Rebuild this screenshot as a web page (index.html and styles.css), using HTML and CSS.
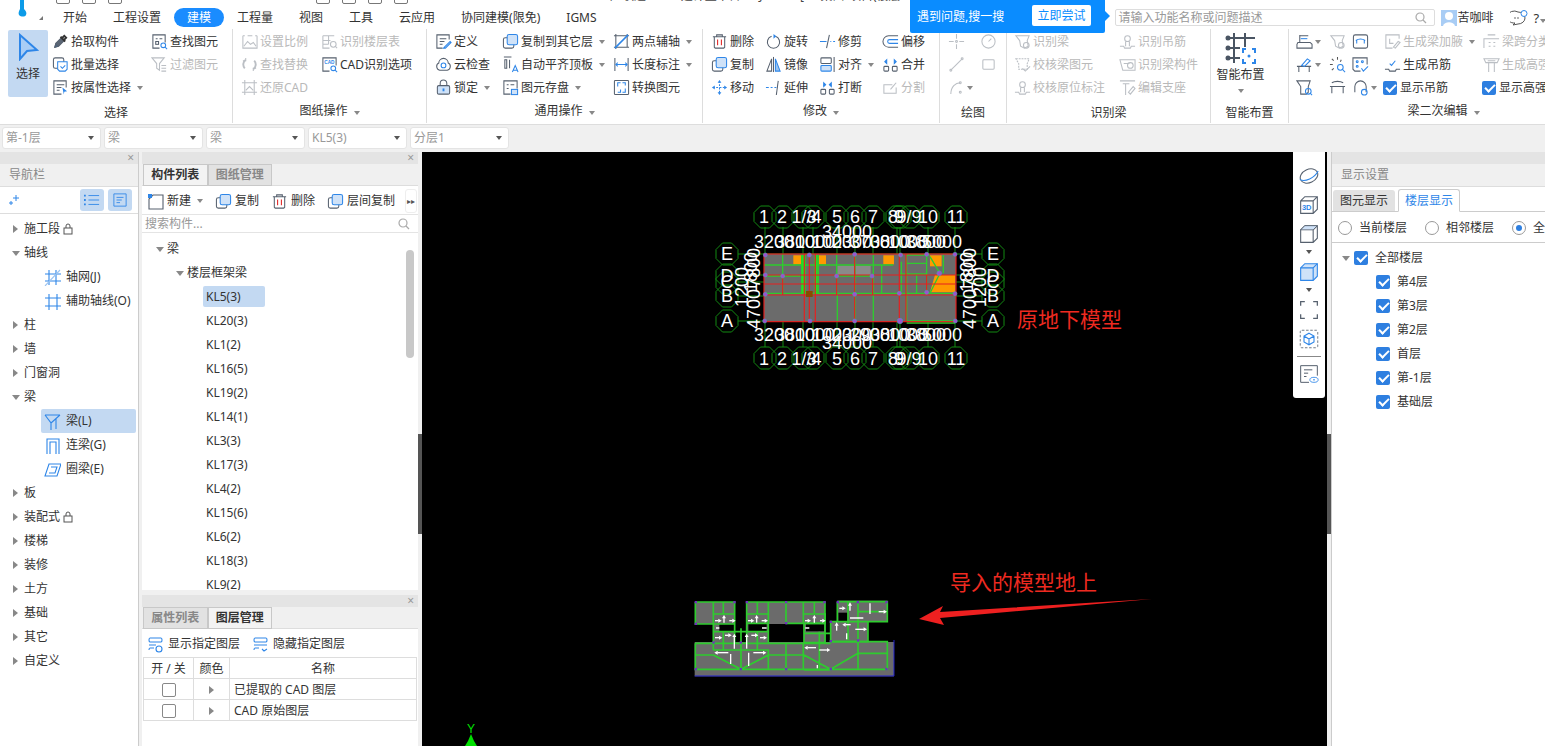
FILE: index.html
```html
<!DOCTYPE html>
<html lang="en">

<head>
    <meta charset="UTF-8">
    <meta name="viewport" content="width=device-width, initial-scale=1.0">
    <title>GTJ - 建模</title>
    <link rel="stylesheet" href="styles.css">
</head>

<body>
    <!-- icon sheet -->
    <svg class="sheet" xmlns="http://www.w3.org/2000/svg">
        <symbol id="pick" viewBox="0 0 18 18"><path d="M3 15l1-4 6-6 3 3-6 6z" fill="#5b6675"/><path d="M9 4l5 5M11 5l2-2 2 2-2 2" stroke="#333" stroke-width="2"/><path d="M3 15l1-3 2 2z" fill="#2e86e8"/></symbol>
        <symbol id="batch" viewBox="0 0 18 18"><rect x="1.5" y="2" width="11" height="11" rx="2"/><path d="M6 6h10v8l-2 2H8l-2-2z" stroke="#2e86e8" fill="#fff"/><path d="M9 11l2 2 3-3" stroke="#2e86e8"/></symbol>
        <symbol id="attr" viewBox="0 0 18 18"><path d="M15 9V2H2v14h8"/><path d="M5 6h8M5 9h5M5 12h3"/><path d="M11 9l5 4-3 .5-.5 3z" fill="#2e86e8" stroke="none"/></symbol>
        <symbol id="find" viewBox="0 0 18 18"><path d="M9 16H2V2h13v8"/><path d="M5 6h2M9 6h3"/><rect x="5" y="9" width="3" height="3"/><circle cx="13" cy="13" r="2.5" stroke="#2e86e8"/><path d="M15 15l2 2" stroke="#2e86e8"/></symbol>
        <symbol id="filter" viewBox="0 0 18 18"><path d="M1 2h13L9 8v7L6 13V8z"/><path d="M11 10h5M11 13h5M11 16h5"/></symbol>
        <symbol id="scale" viewBox="0 0 18 18"><path d="M2 3v13h15V3M2 3h2M15 3h2M7 3h5"/><path d="M3 14l4-5 3 3 3-2 3 4"/></symbol>
        <symbol id="floor" viewBox="0 0 18 18"><path d="M2 3h12M2 3v13h7M2 8h8M2 12h6M8 3v9"/><circle cx="13" cy="12" r="3"/><path d="M15 14l2 2"/></symbol>
        <symbol id="swap" viewBox="0 0 18 18"><path d="M4 13a6 6 0 0 1 1-9M14 5a6 6 0 0 1-1 9" stroke-width="2"/><path d="M5 2v3H2M13 16v-3h3"/></symbol>
        <symbol id="restore" viewBox="0 0 18 18"><path d="M4 1v16M14 1v16M1 4h16M1 14h16"/><path d="M5 12l4-4 4 4"/></symbol>
        <symbol id="cad" viewBox="0 0 18 18"><path d="M9 16H2V2h14v8"/><text x="3.5" y="8" font-size="5" font-family="Liberation Sans" font-weight="700" fill="#2e86e8" stroke="none">CAD</text><circle cx="13" cy="13" r="2.5" stroke="#2e86e8"/><path d="M15 15l2 2" stroke="#2e86e8"/></symbol>
        <symbol id="define" viewBox="0 0 18 18"><path d="M15 7V2H2v14h6"/><path d="M5 6h7M5 9h5M5 12h3"/><path d="M10 15l6-6 1 1-6 6h-2z" stroke="#2e86e8"/></symbol>
        <symbol id="cloud" viewBox="0 0 18 18"><path d="M5 15a4 4 0 0 1-1-7.5a5 5 0 0 1 10 0a4 4 0 0 1-1 7.5z"/><circle cx="9" cy="10" r="2.5" stroke="#2e86e8"/></symbol>
        <symbol id="lock" viewBox="0 0 18 18"><rect x="2.5" y="7" width="13" height="9" rx="1.5" fill="#cfe2f8"/><path d="M5.5 7V4.5a3.5 3.5 0 0 1 7 0V7"/><path d="M9 10v3" stroke="#2e86e8" stroke-width="2"/></symbol>
        <symbol id="copy" viewBox="0 0 18 18"><rect x="1.5" y="5" width="11" height="11" rx="2"/><rect x="5.5" y="1.5" width="11" height="11" rx="2" fill="#cfe2f8" stroke="#2e86e8"/></symbol>
        <symbol id="flush" viewBox="0 0 18 18"><path d="M2 1h8M3 4v9h2V4zM8 4v9"/><path d="M11 17l3-7 3 7M12 15h4" stroke="#2e86e8"/></symbol>
        <symbol id="save" viewBox="0 0 18 18"><path d="M9 16H2V2h14v8"/><path d="M5 6h2M9 6h4M5 10h2"/><rect x="10" y="11" width="6.5" height="5.5" fill="#cfe2f8" stroke="#2e86e8"/></symbol>
        <symbol id="twopoint" viewBox="0 0 18 18"><path d="M3 1v16M15 1v14M1 3h16M1 15h16"/><path d="M2 16L16 2" stroke="#2e86e8" stroke-width="1.6"/></symbol>
        <symbol id="dim" viewBox="0 0 18 18"><path d="M2 2v14M16 2v14"/><path d="M3 9h12M5 7L3 9l2 2M13 7l2 2-2 2" stroke="#2e86e8"/></symbol>
        <symbol id="convert" viewBox="0 0 18 18"><rect x="1.5" y="1.5" width="15" height="15" rx="1"/><path d="M5 8V4h3M13 10v4h-3M10 4h3v3M5 14h3v-3" stroke="#2e86e8"/></symbol>
        <symbol id="del" viewBox="0 0 18 18"><path d="M2 4h14M6 4V2h6v2M3.5 4v11l1 1h9l1-1V4"/><path d="M7 7v6M11 7v6" stroke="#e02020"/></symbol>
        <symbol id="rotate" viewBox="0 0 18 18"><path d="M11 3.5a6.5 6.5 0 1 1-4 0"/><path d="M9 1l3 2.5L9 6z" fill="#2e86e8" stroke="none"/></symbol>
        <symbol id="trim" viewBox="0 0 18 18"><path d="M1 9h7" stroke="#2e86e8"/><path d="M8 16l3-14"/><path d="M12 9h1M15 9h2" stroke="#2e86e8"/></symbol>
        <symbol id="offset" viewBox="0 0 18 18"><path d="M17 3H7a6 6 0 0 0 0 12h10"/><path d="M17 7H8a2 2 0 0 0 0 4h9" stroke="#2e86e8"/></symbol>
        <symbol id="mirror" viewBox="0 0 18 18"><path d="M9 1v16"/><path d="M7 3L2 16h5z"/><path d="M11 3l5 13h-5z" fill="#9cc4f0" stroke="#2e86e8"/></symbol>
        <symbol id="align" viewBox="0 0 18 18"><rect x="2" y="2" width="11" height="6" rx="1"/><rect x="2" y="10" width="11" height="6" rx="1" fill="#cfe2f8" stroke="#2e86e8"/><path d="M16 1v16"/></symbol>
        <symbol id="merge" viewBox="0 0 18 18"><rect x="2" y="11" width="5" height="5" rx="1"/><rect x="11" y="11" width="5" height="5" rx="1"/><path d="M3 6l2-2v4zM15 6l-2-2v4z" fill="#2e86e8" stroke="#2e86e8"/></symbol>
        <symbol id="move" viewBox="0 0 18 18"><path d="M9 2v14M2 9h14" stroke="#2e86e8" stroke-dasharray="2 1.5"/><path d="M7 4l2-3 2 3zM7 14l2 3 2-3zM4 7L1 9l3 2zM14 7l3 2-3 2z" fill="#2e86e8" stroke="none"/></symbol>
        <symbol id="extend" viewBox="0 0 18 18"><path d="M1 9h3M6 9h2M10 9h2" stroke="#2e86e8"/><path d="M14 2l-2 15"/></symbol>
        <symbol id="break" viewBox="0 0 18 18"><rect x="2" y="11" width="5" height="5" rx="1"/><rect x="11" y="11" width="5" height="5" rx="1"/><path d="M7 6L5 4v4zM11 6l2-2v4z" fill="#2e86e8" stroke="#2e86e8"/></symbol>
        <symbol id="split" viewBox="0 0 18 18"><path d="M15 9v6H2V6h9"/><path d="M9 11l6-7"/></symbol>
        <symbol id="d-cross" viewBox="0 0 18 18"><path d="M1 9h5M12 9h5M9 1v5M9 12v5"/><circle cx="9" cy="9" r="1"/></symbol>
        <symbol id="d-arc" viewBox="0 0 18 18"><circle cx="9" cy="9" r="7"/><path d="M9 9l3-3"/></symbol>
        <symbol id="d-line" viewBox="0 0 18 18"><path d="M3 15L15 3"/><circle cx="3" cy="15" r="1"/><circle cx="15" cy="3" r="1"/></symbol>
        <symbol id="d-rect" viewBox="0 0 18 18"><rect x="3" y="4" width="12" height="10" rx="1"/></symbol>
        <symbol id="d-curve" viewBox="0 0 18 18"><path d="M3 16c0-8 5-12 10-12"/><circle cx="13" cy="4" r="1"/><circle cx="13" cy="14" r="1"/></symbol>
        <symbol id="shape" viewBox="0 0 18 18"><path d="M2 3h14l-2 5 1 6-4 2-4-2-1-6z"/><circle cx="13" cy="13" r="3"/></symbol>
        <symbol id="check" viewBox="0 0 18 18"><path d="M2 3h14l-2 5v6H5V8z" stroke-dasharray="2 1"/><path d="M9 13l3 3 5-5"/></symbol>
        <symbol id="hook" viewBox="0 0 18 18"><path d="M1 14h4l1 2h6l1-2h4"/><circle cx="9" cy="6" r="3"/><path d="M7 14V9M11 14V9"/></symbol>
        <symbol id="comp" viewBox="0 0 18 18"><path d="M1 4h16v11H4zM5 8h6"/><circle cx="12" cy="10" r="3"/></symbol>
        <symbol id="seat" viewBox="0 0 18 18"><path d="M1 2h16M4 5h7M7 5v12M10 14l5-6 2 2-5 6z"/></symbol>
        <symbol id="haunch" viewBox="0 0 18 18"><path d="M16 6V2H2v14h7M6 6v5h4"/><path d="M10 15l5-6 2 1-5 6z"/></symbol>
        <symbol id="span" viewBox="0 0 18 18"><path d="M1 16V6h16M5 2h8M6 10h2M11 10h2M6 14h2M11 14h2"/></symbol>
        <symbol id="high" viewBox="0 0 18 18"><path d="M1 3h16l-2 4H3zM6 7v10M12 7v10M5 5h8"/></symbol>
        <symbol id="tool-a" viewBox="0 0 18 18"><path d="M4 2v8M4 3h9"/><path d="M2 10h13l2 2v4H1v-4z" fill="none"/><path d="M5 6h7" stroke="#2e86e8"/></symbol>
        <symbol id="tool-b" viewBox="0 0 18 18"><path d="M1 11h15M3 11v6M14 11v6"/><path d="M6 10l6-7 3 2-6 6z" stroke="#2e86e8"/></symbol>
        <symbol id="tool-c" viewBox="0 0 18 18"><path d="M1 2h14l-2 6v6l-2 2H5V8z"/><circle cx="13" cy="13" r="3" stroke="#2e86e8"/><path d="M15 15l2 2" stroke="#2e86e8"/></symbol>
        <symbol id="tool-d" viewBox="0 0 18 18"><rect x="1.5" y="2" width="15" height="14" rx="2"/><path d="M4 8c3-2 7-2 10 0M5 11V8M13 11V8" stroke="#2e86e8"/></symbol>
        <symbol id="tool-e" viewBox="0 0 18 18"><path d="M9 1v3M3 3l2 2M1 9h3M3 15l2-2M13 4l-1 2" stroke="#555"/><circle cx="12" cy="12" r="3" stroke="#2e86e8"/><path d="M14 14l3 3" stroke="#2e86e8"/></symbol>
        <symbol id="tool-f" viewBox="0 0 18 18"><path d="M9 16H3l-2-2V2h15v7"/><circle cx="5.5" cy="6" r="1" stroke="#2e86e8"/><circle cx="11" cy="6" r="1" stroke="#2e86e8"/><circle cx="5.5" cy="11" r="1" stroke="#2e86e8"/><path d="M10 13l2 3 5-5" stroke="#2e86e8"/></symbol>
        <symbol id="tool-g" viewBox="0 0 18 18"><path d="M1 8h16M3 8v7M15 8v7M3 4c3-2 9-2 12 0"/></symbol>
        <symbol id="tool-h" viewBox="0 0 18 18"><path d="M3 14V8a6 6 0 0 1 12 0v6"/><circle cx="13" cy="14" r="3" stroke="#2e86e8"/></symbol>
        <symbol id="gen-hook" viewBox="0 0 18 18"><path d="M1 14h4l1 2h6l1-2h4"/><path d="M6 8l2 2 4-5" stroke="#2e86e8"/></symbol>
    </svg>

    <div class="top">
        <svg class="logo" viewBox="0 0 12 18"><path d="M4 0h4v9c2 2 3 4 2 6-1 2-5 2-7 0-1-2 0-4 1-6z" fill="#0c9be8"/></svg>
        <div class="titlebar">
            <span class="qa"></span><span class="qa"></span><span class="qa"></span><span class="qa-space"></span><span class="qa"></span><span class="qa"></span><span class="qa"></span><span class="qa"></span>
            <span class="title-text">广联达BIM土建计量平台 GTJ2021 - [D:\桌面\项目(楼层...</span>
        </div>
        <div class="tabs-row">
            <i class="corner"></i>
            <span class="tab">开始</span>
            <span class="tab">工程设置</span>
            <span class="tab tab-on">建模</span>
            <span class="tab">工程量</span>
            <span class="tab">视图</span>
            <span class="tab">工具</span>
            <span class="tab">云应用</span>
            <span class="tab">协同建模(限免)</span>
            <span class="tab">IGMS</span>
            <div class="search-box">请输入功能名称或问题描述
                <svg class="mag" viewBox="0 0 12 12"><circle cx="5" cy="5" r="4"/><path d="M8 8l3 3"/></svg>
            </div>
            <div class="user">
                <svg class="avatar" viewBox="0 0 16 16"><rect width="16" height="16" fill="#a9cdf5"/><circle cx="8" cy="6" r="4" fill="#fff"/><path d="M2 16c1-5 11-5 12 0z" fill="#fff"/></svg>
                苦咖啡
            </div>
            <svg class="chat" viewBox="0 0 18 16"><path d="M8 2a7 6 0 1 0-3 11l-2 2 5-1a7 6 0 0 0 0-12z" fill="none" stroke="#555"/><circle cx="5" cy="8" r=".8" fill="#555"/><circle cx="8" cy="8" r=".8" fill="#555"/><circle cx="14" cy="3.5" r="3" fill="#fff" stroke="#2e86e8"/></svg>
            <span class="help">?<i class="caret"></i></span>
        </div>
        <div class="callout">
            <span>遇到问题,搜一搜</span>
            <span class="try">立即尝试</span>
        </div>
    </div>

    <div class="ribbon">
        <section class="group g-select">
            <div class="group-body">
                <div class="big-select">
                    <svg viewBox="0 0 22 28"><path d="M3 2v24l7-8 10-1z" fill="#a9cdf5" stroke="#2e86e8" stroke-width="2"/></svg>
                    选择
                </div>
                <div class="col">
                    <div class="tool"><svg class="ico"><use href="#pick"/></svg>拾取构件</div>
                    <div class="tool"><svg class="ico"><use href="#batch"/></svg>批量选择</div>
                    <div class="tool"><svg class="ico"><use href="#attr"/></svg>按属性选择<i class="caret"></i></div>
                </div>
                <div class="col">
                    <div class="tool"><svg class="ico"><use href="#find"/></svg>查找图元</div>
                    <div class="tool off"><svg class="ico"><use href="#filter"/></svg>过滤图元</div>
                </div>
            </div>
            <div class="group-label">选择</div>
        </section>
        <section class="group g-drawing">
            <div class="group-body">
                <div class="col">
                    <div class="tool off"><svg class="ico"><use href="#scale"/></svg>设置比例</div>
                    <div class="tool off"><svg class="ico"><use href="#swap"/></svg>查找替换</div>
                    <div class="tool off"><svg class="ico"><use href="#restore"/></svg>还原CAD</div>
                </div>
                <div class="col">
                    <div class="tool off"><svg class="ico"><use href="#floor"/></svg>识别楼层表</div>
                    <div class="tool"><svg class="ico"><use href="#cad"/></svg>CAD识别选项</div>
                </div>
            </div>
            <div class="group-label lift">图纸操作<i class="caret"></i></div>
        </section>
        <section class="group g-common">
            <div class="group-body">
                <div class="col">
                    <div class="tool"><svg class="ico"><use href="#define"/></svg>定义</div>
                    <div class="tool"><svg class="ico"><use href="#cloud"/></svg>云检查</div>
                    <div class="tool"><svg class="ico"><use href="#lock"/></svg>锁定<i class="caret"></i></div>
                </div>
                <div class="col">
                    <div class="tool"><svg class="ico"><use href="#copy"/></svg>复制到其它层<i class="caret"></i></div>
                    <div class="tool"><svg class="ico"><use href="#flush"/></svg>自动平齐顶板<i class="caret"></i></div>
                    <div class="tool"><svg class="ico"><use href="#save"/></svg>图元存盘<i class="caret"></i></div>
                </div>
                <div class="col">
                    <div class="tool"><svg class="ico"><use href="#twopoint"/></svg>两点辅轴<i class="caret"></i></div>
                    <div class="tool"><svg class="ico"><use href="#dim"/></svg>长度标注<i class="caret"></i></div>
                    <div class="tool"><svg class="ico"><use href="#convert"/></svg>转换图元</div>
                </div>
            </div>
            <div class="group-label lift">通用操作<i class="caret"></i></div>
        </section>
        <section class="group g-modify">
            <div class="group-body">
                <div class="col">
                    <div class="tool"><svg class="ico"><use href="#del"/></svg>删除</div>
                    <div class="tool"><svg class="ico"><use href="#copy"/></svg>复制</div>
                    <div class="tool"><svg class="ico"><use href="#move"/></svg>移动</div>
                </div>
                <div class="col">
                    <div class="tool"><svg class="ico"><use href="#rotate"/></svg>旋转</div>
                    <div class="tool"><svg class="ico"><use href="#mirror"/></svg>镜像</div>
                    <div class="tool"><svg class="ico"><use href="#extend"/></svg>延伸</div>
                </div>
                <div class="col">
                    <div class="tool"><svg class="ico"><use href="#trim"/></svg>修剪</div>
                    <div class="tool"><svg class="ico"><use href="#align"/></svg>对齐<i class="caret"></i></div>
                    <div class="tool"><svg class="ico"><use href="#break"/></svg>打断</div>
                </div>
                <div class="col">
                    <div class="tool"><svg class="ico"><use href="#offset"/></svg>偏移</div>
                    <div class="tool"><svg class="ico"><use href="#merge"/></svg>合并</div>
                    <div class="tool off"><svg class="ico"><use href="#split"/></svg>分割</div>
                </div>
            </div>
            <div class="group-label lift">修改<i class="caret"></i></div>
        </section>
        <section class="group g-draw">
            <div class="group-body">
                <div class="col">
                    <div class="tool off"><svg class="ico"><use href="#d-cross"/></svg></div>
                    <div class="tool off"><svg class="ico"><use href="#d-line"/></svg></div>
                    <div class="tool off"><svg class="ico"><use href="#d-curve"/></svg><i class="caret"></i></div>
                </div>
                <div class="col">
                    <div class="tool off"><svg class="ico"><use href="#d-arc"/></svg></div>
                    <div class="tool off"><svg class="ico"><use href="#d-rect"/></svg></div>
                </div>
            </div>
            <div class="group-label">绘图</div>
        </section>
        <section class="group g-beam">
            <div class="group-body">
                <div class="col">
                    <div class="tool off"><svg class="ico"><use href="#shape"/></svg>识别梁</div>
                    <div class="tool off"><svg class="ico"><use href="#check"/></svg>校核梁图元</div>
                    <div class="tool off"><svg class="ico"><use href="#hook"/></svg>校核原位标注</div>
                </div>
                <div class="col">
                    <div class="tool off"><svg class="ico"><use href="#hook"/></svg>识别吊筋</div>
                    <div class="tool off"><svg class="ico"><use href="#comp"/></svg>识别梁构件</div>
                    <div class="tool off"><svg class="ico"><use href="#seat"/></svg>编辑支座</div>
                </div>
            </div>
            <div class="group-label">识别梁</div>
        </section>
        <section class="group g-smart">
            <div class="group-body smart-body">
                <svg class="smart-ico" viewBox="0 0 32 32">
                    <g fill="none" stroke="#4a5563" stroke-width="2"><path d="M9 1v30M20 1v14M3 6h27M3 16h12M3 26h12"/></g>
                    <g fill="#4a5563"><circle cx="3" cy="6" r="2.5"/><circle cx="3" cy="16" r="2.5"/><circle cx="3" cy="26" r="2.5"/></g>
                    <path d="M18 21v-4h3M27 17h3v4M30 27v4h-3M21 31h-3v-4" fill="none" stroke="#2e86e8" stroke-width="2"/>
                    <circle cx="24" cy="24" r="1.5" fill="#2e86e8"/>
                </svg>
                智能布置
                <i class="caret"></i>
            </div>
            <div class="group-label">智能布置</div>
        </section>
        <section class="group g-second">
            <div class="group-body">
                <div class="col">
                    <div class="tool"><svg class="ico"><use href="#tool-a"/></svg><i class="caret"></i></div>
                    <div class="tool"><svg class="ico"><use href="#tool-b"/></svg><i class="caret"></i></div>
                    <div class="tool"><svg class="ico"><use href="#tool-c"/></svg></div>
                </div>
                <div class="col">
                    <div class="tool off"><svg class="ico"><use href="#shape"/></svg></div>
                    <div class="tool"><svg class="ico"><use href="#tool-e"/></svg></div>
                    <div class="tool"><svg class="ico"><use href="#tool-g"/></svg></div>
                </div>
                <div class="col col-narrow">
                    <div class="tool"><svg class="ico"><use href="#tool-d"/></svg></div>
                    <div class="tool"><svg class="ico"><use href="#tool-f"/></svg></div>
                    <div class="tool"><svg class="ico"><use href="#tool-h"/></svg><i class="caret"></i></div>
                </div>
                <div class="col">
                    <div class="tool off"><svg class="ico"><use href="#haunch"/></svg>生成梁加腋<i class="caret"></i></div>
                    <div class="tool"><svg class="ico"><use href="#gen-hook"/></svg>生成吊筋</div>
                    <div class="tool tool-check"><span class="cb"></span>显示吊筋</div>
                </div>
                <div class="col">
                    <div class="tool off"><svg class="ico"><use href="#span"/></svg>梁跨分类</div>
                    <div class="tool off"><svg class="ico"><use href="#high"/></svg>生成高强</div>
                    <div class="tool tool-check"><span class="cb"></span>显示高强</div>
                </div>
            </div>
            <div class="group-label lift">梁二次编辑<i class="caret"></i></div>
        </section>
    </div>

    <div class="combo-bar">
        <div class="combo">第-1层<i class="caret dark"></i></div>
        <div class="combo">梁<i class="caret dark"></i></div>
        <div class="combo">梁<i class="caret dark"></i></div>
        <div class="combo">KL5(3)<i class="caret dark"></i></div>
        <div class="combo">分层1<i class="caret dark"></i></div>
    </div>

    <div class="main">
        <aside class="nav-panel">
            <div class="strip">×</div>
            <div class="panel-title">导航栏</div>
            <div class="nav-tools">
                <svg class="nav-plus" viewBox="0 0 12 12"><path d="M8 1v6M5 4h6M3 7v4M1 9h4" stroke="#2e86e8" fill="none"/></svg>
                <span class="nav-btn"><svg viewBox="0 0 18 14"><path d="M5 2h12M5 7h12M5 12h12" stroke="#2e86e8" fill="none"/><path d="M0 1h2v2H0zM0 6h2v2H0zM0 11h2v2H0z" fill="#2e86e8"/></svg></span>
                <span class="nav-btn"><svg viewBox="0 0 16 16"><path d="M1 1h14v14H1zM4 5h8M4 8h6M4 11h4" stroke="#2e86e8" fill="none"/></svg></span>
            </div>
            <ul class="nav-list">
                <li><i class="arr"></i>施工段<svg class="mini-lock" viewBox="0 0 10 12"><rect x="1" y="5" width="8" height="6" fill="none" stroke="#555"/><path d="M3 5V3a2 2 0 0 1 4 0v2" fill="none" stroke="#555"/></svg></li>
                <li><i class="arr down"></i>轴线</li>
                <li class="sub"><svg class="ico"><path d="M5 1v15M12 1v15M1 5h16M1 12h16" stroke="#2e86e8"/><path d="M1 17L16 1" stroke="#9cc4f0"/></svg>轴网(J)</li>
                <li class="sub"><svg class="ico"><path d="M5 1v16M13 1v16M1 5h16M1 13h16" stroke="#2e86e8"/></svg>辅助轴线(O)</li>
                <li><i class="arr"></i>柱</li>
                <li><i class="arr"></i>墙</li>
                <li><i class="arr"></i>门窗洞</li>
                <li><i class="arr down"></i>梁</li>
                <li class="sub sel"><svg class="ico"><path d="M1 2h15M1 2l6 8v7M16 2L7 10M12 6v10" stroke="#2e86e8"/></svg>梁(L)</li>
                <li class="sub"><svg class="ico"><path d="M3 17V2h12v15M6 17V5h6v12" stroke="#2e86e8"/></svg>连梁(G)</li>
                <li class="sub"><svg class="ico"><path d="M5 3h12l-4 12H1zM7 6h6l-2 6H5" stroke="#2e86e8"/></svg>圈梁(E)</li>
                <li><i class="arr"></i>板</li>
                <li><i class="arr"></i>装配式<svg class="mini-lock" viewBox="0 0 10 12"><rect x="1" y="5" width="8" height="6" fill="none" stroke="#555"/><path d="M3 5V3a2 2 0 0 1 4 0v2" fill="none" stroke="#555"/></svg></li>
                <li><i class="arr"></i>楼梯</li>
                <li><i class="arr"></i>装修</li>
                <li><i class="arr"></i>土方</li>
                <li><i class="arr"></i>基础</li>
                <li><i class="arr"></i>其它</li>
                <li><i class="arr"></i>自定义</li>
            </ul>
        </aside>

        <div class="mid-column">
            <section class="mid-panel list-panel">
                <div class="strip">×</div>
                <div class="tab-row">
                    <span class="ptab on">构件列表</span>
                    <span class="ptab">图纸管理</span>
                </div>
                <div class="mid-tools">
                    <span class="mt"><svg class="ico"><path d="M2 6v10h14V2H6z"/><path d="M1 1h4v4H1z" fill="#2e86e8" stroke="none"/></svg>新建<i class="caret"></i></span>
                    <span class="mt"><svg class="ico"><use href="#copy"/></svg>复制</span>
                    <span class="mt"><svg class="ico"><use href="#del"/></svg>删除</span>
                    <span class="mt"><svg class="ico"><use href="#copy"/></svg>层间复制</span>
                    <span class="more">▸▸</span>
                </div>
                <div class="comp-search">搜索构件...<svg class="mag" viewBox="0 0 12 12"><circle cx="5" cy="5" r="4"/><path d="M8 8l3 3"/></svg></div>
                <div class="scroll-thumb"></div>
                <ul class="comp-tree">
                    <li class="lv1"><i class="arr down"></i>梁</li>
                    <li class="lv2"><i class="arr down"></i>楼层框架梁</li>
                    <li class="lv3"><span class="sel">KL5(3)</span></li>
                    <li class="lv3"><span>KL20(3)</span></li>
                    <li class="lv3"><span>KL1(2)</span></li>
                    <li class="lv3"><span>KL16(5)</span></li>
                    <li class="lv3"><span>KL19(2)</span></li>
                    <li class="lv3"><span>KL14(1)</span></li>
                    <li class="lv3"><span>KL3(3)</span></li>
                    <li class="lv3"><span>KL17(3)</span></li>
                    <li class="lv3"><span>KL4(2)</span></li>
                    <li class="lv3"><span>KL15(6)</span></li>
                    <li class="lv3"><span>KL6(2)</span></li>
                    <li class="lv3"><span>KL18(3)</span></li>
                    <li class="lv3"><span>KL9(2)</span></li>
                </ul>
            </section>
            <section class="mid-panel layer-panel">
                <div class="strip">×</div>
                <div class="tab-row">
                    <span class="ptab">属性列表</span>
                    <span class="ptab on">图层管理</span>
                </div>
                <div class="layer-tools">
                    <span class="mt"><svg class="ico"><path d="M2 4a1 2 0 0 1 1-2h11a1 2 0 0 1 0 4H3a1 2 0 0 1-1-2zM2 9h7M2 14a1 2 0 0 1 1-2h4" stroke="#2e86e8"/><circle cx="12" cy="13" r="3" stroke="#2e86e8"/></svg>显示指定图层</span>
                    <span class="mt"><svg class="ico"><path d="M2 4a1 2 0 0 1 1-2h11a1 2 0 0 1 0 4H3a1 2 0 0 1-1-2zM2 9h13M2 14a1 2 0 0 1 1-2h4M10 13l2 2 3-2" stroke="#2e86e8"/></svg>隐藏指定图层</span>
                </div>
                <table class="layer-table">
                    <tr><th>开 / 关</th><th>颜色</th><th>名称</th></tr>
                    <tr><td><span class="box"></span></td><td><i class="arr"></i></td><td class="name">已提取的 CAD 图层</td></tr>
                    <tr><td><span class="box"></span></td><td><i class="arr"></i></td><td class="name">CAD 原始图层</td></tr>
                </table>
            </section>
        </div>

        <div class="canvas">
            <span class="handle left"></span>
            <span class="handle right"></span>
            <svg class="drawing" viewBox="422 152 905 594">
                <defs>
                    <polygon id="bub" points="-4.5,-11 4.5,-11 11,-4.5 11,4.5 4.5,11 -4.5,11 -11,4.5 -11,-4.5" fill="none" stroke="#138a13"/>
                    <marker id="head" markerUnits="userSpaceOnUse" markerWidth="14" markerHeight="14" refX="3" refY="7" orient="auto"><path d="M2 1L12 7 2 13z" fill="#fff"/></marker>
                </defs>

                <!-- axis lines -->
                <g stroke="#138a13" fill="none">
                    <path d="M765 227V347M783 227V347M803 227V347M813 227V347M837 227V347M855 227V347M873 227V347M897 227V347M900 227V347M928 227V347M955 227V347"/>
                    <path d="M738 254H982M738 275H982M738 282H982M738 296H982M738 321H982"/>
                </g>
                <!-- upper model, in 3x units -->
                <g transform="translate(700 195) scale(.3333)">
                    <rect x="192" y="177" width="576" height="203" fill="#6b6b6b"/>
                    <g fill="#ff9900">
                        <rect x="280" y="181" width="24" height="27"/>
                        <rect x="355" y="181" width="23" height="27"/>
                        <rect x="550" y="181" width="32" height="27"/>
                        <rect x="690" y="181" width="35" height="33"/>
                        <polygon points="705,240 765,240 765,292 690,292"/>
                    </g>
                    <rect x="412" y="212" width="100" height="28" fill="#8a8a8a"/>
                    <g stroke="#2ecc2e" stroke-width="4" fill="none">
                        <path d="M192 210H580M620 205H680M192 243H300M415 243H515M600 237H680M192 295H765M620 180H690M620 378H765M620 384H765"/>
                        <path d="M248 178V295M305 180V295M345 180V295M355 180V295M410 180V295M465 180V380M520 180V295M545 210V295M604 200V290M620 180V378M650 240V295M680 180V295M690 295L720 235M690 185L720 235M730 180V235M412 295V378M520 295V378"/>
                    </g>
                    <rect x="305" y="180" width="12" height="115" fill="#22e022"/>
                    <rect x="345" y="180" width="8" height="115" fill="#22e022"/>
                    <g stroke="#e62020" stroke-width="3.5" fill="none">
                        <rect x="192" y="177" width="576" height="203"/>
                        <path d="M192 240H768M192 267H768M192 300H768"/>
                        <path d="M248 240V300M313 177V380M328 177V380M346 177V380M410 240V300M464 177V380M518 240V300M598 177V380M618 177V380M680 240V300"/>
                    </g>
                    <g fill="#a050d0" stroke="#5a90c0" stroke-width="2">
                        <circle cx="196" cy="180" r="6"/><circle cx="328" cy="180" r="6"/><circle cx="464" cy="178" r="6"/><circle cx="602" cy="180" r="6"/><circle cx="680" cy="178" r="6"/><circle cx="765" cy="178" r="6"/>
                        <circle cx="196" cy="240" r="6"/><circle cx="248" cy="243" r="6"/><circle cx="410" cy="243" r="6"/><circle cx="516" cy="243" r="6"/><circle cx="718" cy="235" r="7"/>
                        <circle cx="196" cy="298" r="6"/><circle cx="464" cy="298" r="6"/><circle cx="598" cy="295" r="6"/><circle cx="680" cy="292" r="6"/><circle cx="765" cy="296" r="6"/>
                        <circle cx="194" cy="378" r="6"/><circle cx="330" cy="378" r="6"/><circle cx="464" cy="378" r="6"/><circle cx="600" cy="378" r="8"/><circle cx="766" cy="378" r="6"/>
                    </g>
                    <rect x="318" y="288" width="20" height="18" fill="#8a4a00"/>
                </g>
                <!-- axis bubbles -->
                <use href="#bub" x="765" y="217"/><use href="#bub" x="783" y="217"/><use href="#bub" x="803" y="217"/><use href="#bub" x="813" y="217"/><use href="#bub" x="837" y="217"/><use href="#bub" x="855" y="217"/><use href="#bub" x="873" y="217"/><use href="#bub" x="897" y="217"/><use href="#bub" x="900" y="217"/><use href="#bub" x="910" y="217"/><use href="#bub" x="928" y="217"/><use href="#bub" x="956" y="217"/>
                <use href="#bub" x="765" y="358"/><use href="#bub" x="783" y="358"/><use href="#bub" x="803" y="358"/><use href="#bub" x="813" y="358"/><use href="#bub" x="837" y="358"/><use href="#bub" x="855" y="358"/><use href="#bub" x="873" y="358"/><use href="#bub" x="897" y="358"/><use href="#bub" x="900" y="358"/><use href="#bub" x="910" y="358"/><use href="#bub" x="928" y="358"/><use href="#bub" x="956" y="358"/>
                <use href="#bub" x="727" y="254"/><use href="#bub" x="727" y="275"/><use href="#bub" x="727" y="283"/><use href="#bub" x="727" y="296"/><use href="#bub" x="727" y="321"/>
                <use href="#bub" x="993" y="254"/><use href="#bub" x="993" y="275"/><use href="#bub" x="993" y="283"/><use href="#bub" x="993" y="296"/><use href="#bub" x="993" y="321"/>
                <!-- axis and dimension text -->
                <g class="cad-text">
                    <text x="764" y="223">1</text><text x="782" y="223">2</text><text x="804" y="223">1/3</text><text x="814" y="223">/4</text><text x="837" y="223">5</text><text x="855" y="223">6</text><text x="873" y="223">7</text><text x="893" y="223">8</text><text x="899" y="223">9</text><text x="909" y="223">9/9</text><text x="928" y="223">10</text><text x="956" y="223">11</text>
                    <text x="764" y="365">1</text><text x="782" y="365">2</text><text x="804" y="365">1/3</text><text x="814" y="365">/4</text><text x="837" y="365">5</text><text x="855" y="365">6</text><text x="873" y="365">7</text><text x="893" y="365">8</text><text x="899" y="365">9</text><text x="909" y="365">9/9</text><text x="928" y="365">10</text><text x="956" y="365">11</text>
                    <text x="727" y="260">E</text><text x="727" y="282">D</text><text x="727" y="288">C</text><text x="727" y="302">B</text><text x="727" y="327">A</text>
                    <text x="993" y="260">E</text><text x="993" y="282">D</text><text x="993" y="288">C</text><text x="993" y="302">B</text><text x="993" y="327">A</text>
                    <text x="847" y="238">34000</text>
                    <text x="847" y="349">34000</text>
                    <text x="774" y="248">3200</text><text x="795" y="248">3800</text><text x="815" y="248">1000</text><text x="832" y="248">1000</text><text x="852" y="248">2300</text><text x="870" y="248">3700</text><text x="890" y="248">3800</text><text x="908" y="248">1000</text><text x="926" y="248">3800</text><text x="942" y="248">5000</text>
                    <text x="774" y="341">3200</text><text x="795" y="341">3800</text><text x="815" y="341">1000</text><text x="832" y="341">1000</text><text x="852" y="341">2300</text><text x="870" y="341">2900</text><text x="890" y="341">3800</text><text x="908" y="341">1000</text><text x="926" y="341">3800</text><text x="942" y="341">5000</text>
                    <text transform="translate(760 309) rotate(-90)">4700</text>
                    <text transform="translate(760 268) rotate(-90)">7800</text>
                    <text transform="translate(757 272) rotate(-90)">1800</text>
                    <text transform="translate(748 287) rotate(-90)">1200</text>
                    <text transform="translate(976 309) rotate(-90)">4700</text>
                    <text transform="translate(976 268) rotate(-90)">7800</text>
                    <text transform="translate(973 272) rotate(-90)">1800</text>
                    <text transform="translate(986 287) rotate(-90)">1200</text>
                </g>
                <text class="note" x="1017" y="327">原地下模型</text>

                <!-- lower model, in 3x units -->
                <g transform="translate(680 590) scale(.3333)">
                    <g fill="#6b6b6b">
                        <rect x="44" y="156" width="598" height="103"/>
                        <rect x="46" y="36" width="118" height="66"/>
                        <rect x="200" y="36" width="235" height="66"/>
                        <rect x="100" y="70" width="65" height="90"/>
                        <rect x="200" y="70" width="65" height="90"/>
                        <rect x="372" y="70" width="65" height="90"/>
                        <rect x="452" y="95" width="112" height="62"/>
                        <rect x="472" y="32" width="150" height="63"/>
                    </g>
                    <g fill="#000">
                        <rect x="118" y="102" width="47" height="22"/>
                        <rect x="205" y="102" width="55" height="22"/>
                        <rect x="378" y="102" width="55" height="22"/>
                        <rect x="475" y="68" width="28" height="27"/>
                    </g>
                    <path d="M44 258H642V150" fill="none" stroke="#2222cc" stroke-width="3"/>
                    <g fill="none" stroke="#2ecc2e" stroke-width="5">
                        <path d="M46 36H164V102H100M46 36V102H100M100 36V180M130 36V70M164 36V160M100 72H164"/>
                        <path d="M200 36H435V100H318M200 36V100H265M232 36V70M265 36V160M318 36V100M370 36V100M403 36V70M200 72H265M200 70V160"/>
                        <path d="M372 72H435V158H372V100M372 100H435M452 95H564V155H452ZM472 35H622V95H564M472 35V95M534 35V155M504 35V150M534 65H622"/>
                        <path d="M46 160H452M452 155H622V238H452M46 160V238H452M100 180H265V238M183 115V238M46 195H100M265 195H370M318 160V238M370 160V238M100 195L183 238L265 195M372 195L452 238M452 238L534 190M534 190H622M534 155V238M418 125V238M372 130H452M100 125H265M130 125V180M232 125V180M100 238H265M372 240H452"/>
                    </g>
                    <g fill="none" stroke="#fff" stroke-width="4" marker-end="url(#head)">
                        <path d="M105 92H116"/><path d="M148 92H158"/><path d="M132 98V84"/><path d="M204 92H214"/><path d="M245 92H255"/><path d="M230 98V84"/>
                        <path d="M105 143H118"/><path d="M135 136H146"/><path d="M163 176V140"/><path d="M200 176V140"/><path d="M214 136H226"/><path d="M240 143H252"/>
                        <path d="M145 188H112"/><path d="M220 188H250"/><path d="M375 92H384"/><path d="M420 92H428"/><path d="M403 98V84"/>
                        <path d="M408 173H382"/><path d="M418 180H442"/><path d="M478 55H488"/><path d="M510 62V46"/><path d="M470 122V106"/><path d="M512 104H496"/><path d="M526 118H552"/><path d="M596 65H612"/>
                    </g>
                    <g fill="none" stroke="#fff" stroke-width="4">
                        <path d="M108 114H118M246 114H260M152 192V222M206 188V228M376 114H388M412 225V235M510 84H550M500 130V148M570 40V72"/>
                    </g>
                    <g fill="#7030c0">
                        <rect x="44" y="33" width="7" height="7"/><rect x="160" y="33" width="7" height="7"/><rect x="197" y="33" width="7" height="7"/><rect x="315" y="33" width="7" height="7"/><rect x="430" y="33" width="7" height="7"/><rect x="470" y="33" width="7" height="7"/><rect x="530" y="33" width="7" height="7"/><rect x="616" y="33" width="7" height="7"/>
                        <rect x="44" y="98" width="7" height="7"/><rect x="97" y="154" width="7" height="7"/><rect x="179" y="154" width="7" height="7"/><rect x="315" y="96" width="7" height="7"/><rect x="449" y="92" width="7" height="7"/><rect x="449" y="150" width="7" height="7"/><rect x="531" y="148" width="7" height="7"/>
                        <rect x="44" y="234" width="7" height="7"/><rect x="179" y="234" width="7" height="7"/><rect x="315" y="234" width="7" height="7"/><rect x="449" y="234" width="7" height="7"/><rect x="616" y="234" width="7" height="7"/>
                    </g>
                </g>

                <text class="note" x="950" y="590">导入的模型地上</text>
                <polygon points="1152,599 940,612 943,606 919,619 944,625 940,618" fill="#ee2020"/>

                <!-- y axis -->
                <text x="467" y="733" class="axis-y">Y</text>
                <path d="M471 734L474 741 477 746H465L468 741z" fill="#00e000"/>
            </svg>

            <div class="view-tools">
                <svg viewBox="0 0 24 24"><ellipse cx="12" cy="12" rx="11" ry="8" transform="rotate(-25 12 12)" fill="none" stroke="#56606e" stroke-width="1.3"/><path d="M1 16C7 20 19 14 23 6" fill="none" stroke="#2e86e8" stroke-width="1.3"/></svg>
                <svg viewBox="0 0 24 24"><path d="M2 7l5-5h15v15l-5 5H2zM2 7h15v15M17 7l5-5" fill="none" stroke="#56606e" stroke-width="1.3"/><text x="3.5" y="18.500" class="t3d">3D</text></svg>
                <svg viewBox="0 0 24 24"><path d="M2 7l5-5h15v15l-5 5H2zM17 7v15M17 7l5-5" fill="none" stroke="#56606e" stroke-width="1.3"/><path d="M2 7l5-5h15l-5 5z" fill="#cfe2f8" stroke="#56606e"/></svg>
                <i class="caret dark"></i>
                <svg viewBox="0 0 24 24"><path d="M2 7l5-5h15v15l-5 5H2z" fill="#cfe2f8" stroke="#2e86e8" stroke-width="1.3"/><path d="M2 7h15v15M17 7l5-5" fill="none" stroke="#2e86e8" stroke-width="1.3"/></svg>
                <i class="caret dark"></i>
                <svg viewBox="0 0 24 24"><path d="M2 7V2h5M17 2h5v5M22 17v5h-5M7 22H2v-5" fill="none" stroke="#56606e" stroke-width="1.5"/></svg>
                <svg viewBox="0 0 24 24"><rect x="1.500" y="1.500" width="21" height="21" rx="2" fill="none" stroke="#56606e" stroke-dasharray="3 2"/><path d="M12 5l6 3.500v7L12 19l-6-3.500v-7zM6 8.500l6 3.500 6-3.500M12 12v7" fill="none" stroke="#2e86e8" stroke-width="1.3"/></svg>
                <span class="vt-sep"></span>
                <svg viewBox="0 0 24 24"><path d="M12 22H2V2h20v12M6 7h10M6 11h5M6 15h3" fill="none" stroke="#56606e" stroke-width="1.2"/><ellipse cx="18" cy="19" rx="5" ry="3" fill="none" stroke="#2e86e8"/><circle cx="18" cy="19" r="1" fill="#2e86e8"/></svg>
            </div>
        </div>

        <aside class="display-panel">
            <div class="strip"></div>
            <div class="panel-title">显示设置</div>
            <div class="display-tabs">
                <span class="dtab">图元显示</span>
                <span class="dtab on">楼层显示</span>
            </div>
            <div class="radio-row">
                <label><span class="radio"></span>当前楼层</label>
                <label><span class="radio"></span>相邻楼层</label>
                <label><span class="radio on"></span>全部楼层</label>
            </div>
            <ul class="floor-tree">
                <li><i class="arr down"></i><span class="cb"></span>全部楼层</li>
                <li class="child"><span class="cb"></span>第4层</li>
                <li class="child"><span class="cb"></span>第3层</li>
                <li class="child"><span class="cb"></span>第2层</li>
                <li class="child"><span class="cb"></span>首层</li>
                <li class="child"><span class="cb"></span>第-1层</li>
                <li class="child"><span class="cb"></span>基础层</li>
            </ul>
        </aside>
    </div>
</body>

</html>
```

FILE: styles.css
```css
* {
    box-sizing: border-box;
}

html, body {
    height: 100%;
}

body {
    margin: 0;
    width: 1545px;
    height: 746px;
    overflow: hidden;
    background-color: #fff;
    color: #333;
    font-family: "Noto Sans", "Noto Sans CJK SC", sans-serif;
    font-size: 12px;
    line-height: 16px;
}

ul {
    list-style: none;
    margin: 0;
    padding: 0;
}

.sheet {
    display: none;
}

/* small shared bits */
.caret {
    display: inline-block;
    width: 0;
    height: 0;
    margin-left: 6px;
    border-left: 3px solid transparent;
    border-right: 3px solid transparent;
    border-top: 4px solid #888;
}

.caret.dark {
    border-top-color: #555;
}

.arr {
    display: inline-block;
    width: 0;
    height: 0;
    border-top: 4px solid transparent;
    border-bottom: 4px solid transparent;
    border-left: 5px solid #888;
}

.arr.down {
    border-left: 4px solid transparent;
    border-right: 4px solid transparent;
    border-top: 5px solid #888;
    border-bottom: 0;
}

.cb {
    position: relative;
    display: inline-block;
    flex: none;
    width: 14px;
    height: 14px;
    border-radius: 2px;
    background-color: #2e7fe0;
}

.cb::after {
    content: "";
    position: absolute;
    left: 3px;
    top: 3px;
    width: 8px;
    height: 4px;
    border-left: 2px solid #fff;
    border-bottom: 2px solid #fff;
    transform: rotate(-45deg);
}

.mag {
    width: 12px;
    height: 12px;
    fill: none;
    stroke: #aaa;
    stroke-width: 1.2;
}

/* top bar */
.top {
    position: relative;
    height: 27px;
}

.logo {
    position: absolute;
    left: 16px;
    top: 0;
    width: 12px;
    height: 18px;
}

.titlebar {
    display: flex;
    align-items: flex-end;
    gap: 12px;
    height: 4px;
    padding-left: 56px;
    overflow: hidden;
}

.qa {
    flex: none;
    width: 14px;
    height: 12px;
    border: 1px solid #777;
    border-radius: 2px;
}

.qa-space {
    width: 170px;
}

.title-text {
    flex: none;
    margin-left: 190px;
    color: #444;
    white-space: nowrap;
}

.tabs-row {
    display: flex;
    align-items: center;
    height: 19px;
    margin-top: 4px;
    padding-left: 50px;
}

.corner {
    position: absolute;
    left: 39px;
    top: 16px;
    border-left: 4px solid transparent;
    border-bottom: 4px solid #777;
}

.tab {
    flex: none;
    padding: 0 13px;
    height: 19px;
    line-height: 20px;
    white-space: nowrap;
}

.tab-on {
    border-radius: 10px;
    background-color: #1a8cff;
    color: #fff;
}

.callout {
    position: absolute;
    left: 910px;
    top: 0;
    display: flex;
    align-items: center;
    width: 195px;
    height: 33px;
    padding: 0 14px 0 7px;
    justify-content: space-between;
    border-radius: 0 0 2px 2px;
    background-color: #0a8cff;
    color: #fff;
}

.callout::after {
    content: "";
    position: absolute;
    right: -5px;
    top: 11px;
    border-top: 5px solid transparent;
    border-bottom: 5px solid transparent;
    border-left: 5px solid #0a8cff;
}

.try {
    display: block;
    width: 59px;
    height: 21px;
    margin-top: -2px;
    border-radius: 2px;
    background-color: #fff;
    color: #0a8cff;
    line-height: 21px;
    text-align: center;
}

.search-box {
    position: relative;
    flex: none;
    width: 320px;
    height: 17px;
    margin-left: 505px;
    padding-left: 3px;
    border: 1px solid #ddd;
    border-radius: 2px;
    color: #999;
    line-height: 15px;
    white-space: nowrap;
}

.search-box .mag {
    position: absolute;
    right: 7px;
    top: 2px;
}

.user {
    display: flex;
    flex: none;
    align-items: center;
    margin-left: 6px;
    white-space: nowrap;
}

.avatar {
    width: 16px;
    height: 16px;
    margin-right: 1px;
}

.chat {
    flex: none;
    width: 18px;
    height: 16px;
    margin-left: 16px;
}

.help {
    flex: none;
    margin-left: 6px;
    font-size: 13px;
    white-space: nowrap;
}

.help .caret {
    margin-left: 1px;
}

/* ribbon */
.ribbon {
    display: flex;
    height: 98px;
    border-bottom: 1px solid #ddd;
    overflow: hidden;
}

.group {
    display: flex;
    flex: none;
    flex-direction: column;
    height: 94px;
    margin-top: 2px;
    border-right: 1px solid #ddd;
}

.group-body {
    display: flex;
    flex: 1;
    padding-top: 1px;
}

.group-label {
    flex: none;
    height: 20px;
    line-height: 20px;
    text-align: center;
    white-space: nowrap;
}

.group-label.lift {
    line-height: 16px;
}

.col {
    display: flex;
    flex: none;
    flex-direction: column;
}

.tool {
    display: flex;
    align-items: center;
    height: 23px;
    white-space: nowrap;
}

.tool.off {
    color: #b9b9b9;
}

.tool.off .ico {
    opacity: 0.4;
}

.ico {
    flex: none;
    width: 17px;
    height: 17px;
    margin-right: 2px;
    fill: none;
    stroke: #56606e;
    stroke-width: 1.1;
}

.big-select {
    display: flex;
    flex: none;
    flex-direction: column;
    align-items: center;
    gap: 5px;
    width: 40px;
    height: 67px;
    margin-right: -4px;
    padding-top: 3px;
    border-radius: 2px;
    background-color: #c3d9f2;
}

.big-select svg {
    width: 22px;
    height: 28px;
}

.g-select {
    width: 233px;
}

.g-select .group-body {
    gap: 8px;
    padding-left: 8px;
}

.g-drawing {
    width: 194px;
}

.g-drawing .group-body {
    gap: 13px;
    padding-left: 8px;
}

.g-common {
    width: 276px;
}

.g-common .group-body {
    gap: 8px;
    padding-left: 8px;
}

.g-common .col:first-child {
    margin-right: 4px;
}

.g-modify {
    width: 237px;
}

.g-modify .group-body {
    gap: 11px;
    padding-left: 8px;
}

.g-modify .col:last-child {
    margin-left: -3px;
}

.g-draw {
    width: 67px;
}

.g-draw .group-body {
    gap: 7px;
    padding-left: 8px;
}

.g-draw .caret {
    margin-left: 0;
}

.g-beam {
    width: 204px;
}

.g-beam .group-body {
    gap: 14px;
    padding-left: 7px;
}

.g-smart {
    width: 78px;
}

.smart-body {
    flex-direction: column;
    align-items: center;
    padding-top: 3px;
    padding-right: 18px;
}

.smart-ico {
    width: 32px;
    height: 32px;
    margin-bottom: 3px;
}

.smart-body .caret {
    margin: 6px 0 0;
}

.g-second {
    flex: 1;
    border-right: 0;
}

.g-second .group-body {
    gap: 8px;
    padding-left: 7px;
}

.g-second .caret {
    margin-left: 0;
}

.g-second .col-narrow {
    margin-left: -4px;
    margin-right: -1px;
}

.g-second .group-label {
    padding-left: 48px;
}

.g-second .off .caret {
    margin-left: 6px;
}

.g-second .group-label .caret {
    margin-left: 6px;
}

.tool-check {
    gap: 3px;
    margin-left: -1px;
}

/* combo boxes */
.combo-bar {
    display: flex;
    gap: 3px;
    height: 27px;
    padding: 2px 0 0 2px;
    background-color: #f0f0f0;
}

.combo {
    display: flex;
    align-items: center;
    justify-content: space-between;
    width: 99px;
    height: 22px;
    padding: 0 6px 0 3px;
    border: 1px solid #e4e4e4;
    border-radius: 3px;
    background-color: #fff;
    color: #999;
}

/* main area */
.main {
    display: flex;
    height: 594px;
    background-color: #f0f0f0;
}

.strip {
    height: 12px;
    padding-right: 4px;
    background-color: #e4e4e4;
    color: #999;
    font-size: 12px;
    line-height: 11px;
    text-align: right;
}

.panel-title {
    height: 22px;
    padding-left: 9px;
    background-color: #f0f0f0;
    color: #888;
    line-height: 21px;
}

.nav-panel {
    flex: none;
    width: 139px;
    border-right: 1px solid #ccc;
    background-color: #fff;
}

.nav-tools {
    display: flex;
    align-items: center;
    gap: 4px;
    height: 28px;
    padding-left: 8px;
    border-top: 1px solid #ddd;
    border-bottom: 1px solid #ddd;
}

.nav-plus {
    width: 12px;
    height: 12px;
    margin-right: 56px;
}

.nav-btn {
    display: flex;
    align-items: center;
    justify-content: center;
    width: 24px;
    height: 22px;
    border-radius: 3px;
    background-color: #c3d9f2;
}

.nav-btn svg {
    width: 16px;
    height: 14px;
}

.nav-list {
    padding-top: 3px;
}

.nav-list li {
    display: flex;
    align-items: center;
    height: 24px;
    padding-left: 13px;
    white-space: nowrap;
}

.nav-list .arr {
    width: 0;
    margin-right: 6px;
}

.nav-list .arr.down {
    margin-left: -1px;
    margin-right: 4px;
}

.nav-list .sub {
    height: 24px;
    margin-left: 41px;
    margin-right: 2px;
    padding-left: 3px;
}

.nav-list .sub .ico {
    margin-right: 5px;
}

.nav-list .sel {
    border-radius: 2px;
    background-color: #c3d9f2;
}

.mini-lock {
    width: 10px;
    height: 12px;
    margin-left: 3px;
}

.mid-column {
    display: flex;
    flex: none;
    flex-direction: column;
    gap: 5px;
    width: 276px;
    margin-left: 3px;
}

.mid-panel {
    position: relative;
    background-color: #fff;
    overflow: hidden;
}

.list-panel {
    flex: none;
    height: 438px;
}

.layer-panel {
    flex: 1;
}

.tab-row {
    display: flex;
    height: 22px;
    padding-left: 1px;
    border-bottom: 1px solid #ddd;
    background-color: #f0f0f0;
}

.ptab {
    width: 64.5px;
    height: 22px;
    border: 1px solid #c8c8c8;
    background-color: #e2e2e2;
    color: #888;
    font-weight: 700;
    line-height: 20px;
    text-align: center;
}

.ptab.on {
    background-color: #f3f3f3;
    color: #333;
}

.mid-tools {
    display: flex;
    align-items: center;
    gap: 12px;
    height: 29px;
    padding: 2px 0 0 5px;
    border-bottom: 1px solid #e4e4e4;
    white-space: nowrap;
}

.mt {
    display: flex;
    flex: none;
    align-items: center;
}

.mt .ico {
    margin-right: 3px;
}

.more {
    margin-left: -2px;
    padding: 3px 1px;
    border: 1px solid #eee;
    border-radius: 3px;
    color: #555;
    font-size: 8px;
}

.comp-search {
    display: flex;
    align-items: center;
    justify-content: space-between;
    height: 18px;
    padding: 0 8px 0 3px;
    border-bottom: 1px solid #e4e4e4;
    color: #999;
}

.scroll-thumb {
    position: absolute;
    right: 4px;
    top: 98px;
    width: 8px;
    height: 108px;
    border-radius: 4px;
    background-color: #c8c8c8;
}

.comp-tree {
    padding-top: 3px;
}

.comp-tree li {
    display: flex;
    align-items: center;
    height: 24px;
}

.comp-tree .arr {
    margin-right: 3px;
}

.lv1 {
    padding-left: 14px;
    padding-top: 2px;
}

.lv2 {
    padding-left: 34px;
    padding-top: 2px;
}

.lv3 {
    padding-left: 61px;
}

.lv3 span {
    display: block;
    min-width: 62px;
    height: 21px;
    padding-left: 3px;
    border-radius: 2px;
    line-height: 21px;
}

.lv3 .sel {
    background-color: #c3d9f2;
}

.layer-tools {
    display: flex;
    align-items: center;
    gap: 12px;
    height: 28px;
    padding: 2px 0 0 5px;
    white-space: nowrap;
}

.layer-tools .ico {
    margin-right: 4px;
}

.layer-table {
    width: 274px;
    margin-left: 1px;
    border-collapse: collapse;
    table-layout: fixed;
}

.layer-table th, .layer-table td {
    height: 21px;
    padding: 0;
    border: 1px solid #ddd;
    font-weight: 400;
    line-height: 19px;
    text-align: center;
}

.layer-table th:first-child {
    width: 50px;
}

.layer-table th:nth-child(2) {
    width: 36px;
}

.layer-table .name {
    padding-left: 4px;
    text-align: left;
}

.box {
    display: inline-block;
    width: 14px;
    height: 14px;
    border: 1px solid #888;
    border-radius: 2px;
    vertical-align: middle;
}

/* canvas */
.canvas {
    position: relative;
    flex: none;
    width: 905px;
    margin-left: 4px;
    background-color: #000;
}

.drawing {
    display: block;
    width: 905px;
    height: 594px;
}

.cad-text text {
    fill: #fff;
    font-family: "Liberation Sans", sans-serif;
    font-size: 18px;
    text-anchor: middle;
}

.note {
    fill: #ee2a20;
    font-size: 21px;
    font-family: "Noto Sans CJK SC", sans-serif;
}

.axis-y {
    fill: #00e000;
    font-family: "Liberation Sans", sans-serif;
    font-size: 12px;
}

.t3d {
    fill: #2e86e8;
    font-family: "Liberation Sans", sans-serif;
    font-size: 9px;
    font-weight: 700;
}

.handle {
    position: absolute;
    top: 282px;
    width: 4px;
    height: 100px;
    background-color: #555;
}

.handle.left {
    left: -4px;
}

.handle.right {
    right: -4px;
}

.view-tools {
    position: absolute;
    right: 2px;
    top: 0;
    display: flex;
    flex-direction: column;
    align-items: center;
    width: 32px;
    height: 246px;
    padding-top: 14px;
    border-radius: 0 0 3px 3px;
    background-color: #fff;
}

.view-tools svg {
    flex: none;
    width: 20px;
    height: 20px;
    margin-bottom: 9px;
}

.view-tools .caret {
    flex: none;
    margin: -3px 0 8px;
}

.vt-sep {
    flex: none;
    width: 24px;
    height: 1px;
    margin: -2px 0 7px;
    background-color: #888;
}

/* right panel */
.display-panel {
    flex: none;
    width: 214px;
    margin-left: 4px;
    background-color: #fff;
    overflow: hidden;
    border-left: 1px solid #ccc;
}

.display-tabs {
    display: flex;
    align-items: flex-end;
    gap: 3px;
    height: 26px;
    padding-left: 1px;
    border-top: 1px solid #ddd;
    border-bottom: 1px solid #ccc;
}

.dtab {
    width: 62px;
    height: 21px;
    border-radius: 3px 3px 0 0;
    background-color: #e2e2e2;
    line-height: 21px;
    text-align: center;
}

.dtab.on {
    height: 23px;
    margin-bottom: -1px;
    border: 1px solid #ccc;
    border-bottom: 1px solid #fff;
    background-color: #fff;
    color: #2e86e8;
}

.radio-row {
    display: flex;
    align-items: center;
    gap: 18px;
    height: 31px;
    padding: 2px 0 0 6px;
    border-bottom: 1px solid #ccc;
    white-space: nowrap;
}

.radio-row label {
    display: flex;
    flex: none;
    align-items: center;
    gap: 7px;
}

.radio {
    position: relative;
    display: inline-block;
    width: 14px;
    height: 14px;
    border: 1px solid #999;
    border-radius: 50%;
}

.radio.on::after {
    content: "";
    position: absolute;
    left: 3px;
    top: 3px;
    width: 6px;
    height: 6px;
    border-radius: 50%;
    background-color: #2e7fe0;
}

.floor-tree {
    padding-top: 3px;
}

.floor-tree li {
    display: flex;
    align-items: center;
    gap: 7px;
    height: 24px;
    padding-left: 10px;
}

.floor-tree .arr.down {
    margin-right: -3px;
}

.floor-tree .child {
    padding-left: 44px;
}
```
